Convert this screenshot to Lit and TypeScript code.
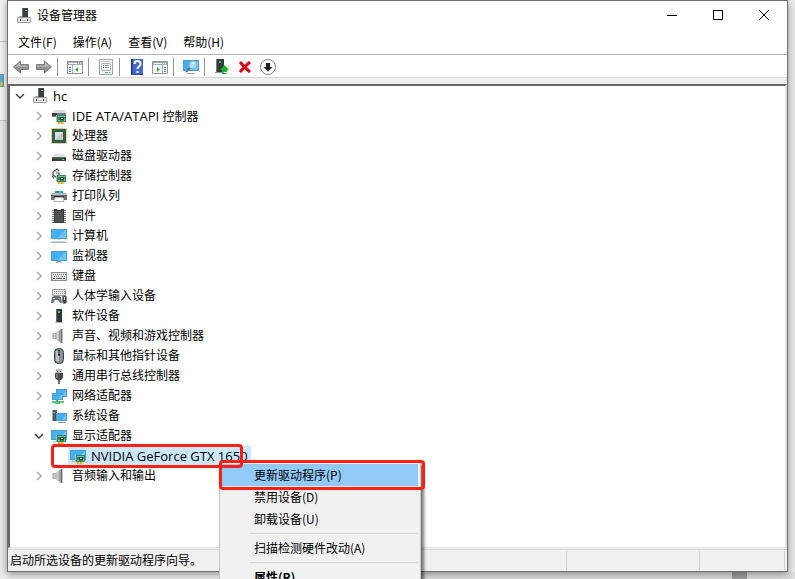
import { LitElement, html, svg, css, nothing } from "lit";
import { customElement, property, state } from "lit/decorators.js";
import { classMap } from "lit/directives/class-map.js";

const screen = (x: number, y: number, w: number, h: number) => svg`
  <rect x=${x} y=${y} width=${w} height=${h} fill="#4a9fcf"/>
  <rect x=${x + 1} y=${y + 1} width=${w - 2} height=${h - 2} fill="#41b0f5"/>
  <path d="M${x + w - 1} ${y + 1}v${h - 2}h-${w - 7}z" fill="#6cc4fa"/>`;

const card = svg`
  <path d="M5 7h1v7H5z" fill="#b5b5b5"/>
  <path d="M6 7h9v7H6z" fill="#2f8a5f"/>
  <path d="M7 8h7v1H7zM7 12h2v1H7zM13 11h1v2h-1z" fill="#7cc69a"/>
  <path d="M9 9h4v3H9z" fill="#174b38"/><path d="M10 10h2v1h-2z" fill="#b3d8c4"/>
  <path d="M7 14h6v2H7z" fill="#f2a51c"/><path d="M9 14h1v2H9zM12 14h1v2h-1z" fill="#ffe08a"/>`;

const speaker = svg`
  <path d="M2 5.500h3v5H2z" fill="#c9cdd0" stroke="#a3a8ab"/><path d="M5 5l5-4v14l-5-4z" fill="#9a9ea1"/>
  <path d="M5 5l3-2.400v10.800L5 11z" fill="#c3c6c8"/><path d="M10 1h1v14h-1z" fill="#6f7477"/><path d="M11 1h1v14h-1z" fill="#b9bdc0"/>`;

const glyphs: Record<string, unknown> = {
  computerRoot: svg`
    <path d="M6 0h6v9H6z" fill="#3c4244"/><path d="M6 0h1v9H6z" fill="#687073"/><path d="M9 2h2v1H9z" fill="#29e32e"/>
    <path d="M3 8h3v1H3z" fill="#9ea3a5"/><path d="M2 9h12l1 2H1z" fill="#c4c8ca"/><path d="M1.500 9.500h13v5h-13z" fill="#e6e8e8" stroke="#989da0"/>
    <path d="M4 11h1v2H4zM11 11h1v2h-1z" fill="#2f3436"/><path d="M6 12h4v1H6z" fill="#c4c8ca"/>`,
  ide: svg`<path d="M3 2h10l2 3H1z" fill="#dadcde"/><path d="M1 5h14v4H1z" fill="#777d80"/><path d="M1 5h5v3H1z" fill="#3c4043"/>${card}`,
  cpu: svg`
    <rect x=".5" y=".5" width="15" height="15" fill="none" stroke="#c99a3a" stroke-dasharray="1 1"/>
    <path d="M1 1h14v14H1z" fill="#2f5f47"/><path d="M4 4h8v8H4z" fill="#dcdedd"/><path d="M4 12l8-8v8z" fill="#c3c7c4"/>`,
  disk: svg`<path d="M3 6h10l2 3H1z" fill="#dfe2e3"/><path d="M1 9h14v4H1z" fill="#3a3f41"/><path d="M1 9h14v1H1z" fill="#666"/><path d="M11 11h2v1h-2z" fill="#32e94a"/>`,
  storage: svg`
    <path d="M8 3L6 1 2 4v3l3 2 3-2V5H5M1 8l2 2" fill="none" stroke="#4a4e50" stroke-width="1.200"/>
    <path d="M3 4l3-1" stroke="#b8bcbf"/>${card}`,
  printer: svg`
    <path d="M4 3h8v2H4z" fill="#188ed4"/><path d="M8 3h3v2H8z" fill="#3cc28b"/>
    <path d="M2 5h12l2 2v5h-3v-2H3v2H0V7z" fill="#6b7073"/><path d="M2 5h12l1 2H1z" fill="#b9bdc0"/>
    <path d="M3 8h10v2H3z" fill="#303436"/><path d="M4 9.500h8l1 4H3z" fill="#fff" stroke="#aab0b3"/>`,
  firmware: svg`
    <path d="M2 2v13M14 2v13" stroke="#6b6f71" stroke-width="2" stroke-dasharray="1 1"/>
    <path d="M3 1h3v1h4V1h3v14H3z" fill="#373b3d"/><path d="M4 3h8v11H4z" fill="#4c5153"/>`,
  computer: svg`${screen(0, 1, 16, 10)}<path d="M6 11h4v1H6z" fill="#d6dde0"/><path d="M2 13h12l2 1H0z" fill="#cfd6da"/><path d="M0 14h16v1H0z" fill="#9db9c6"/>`,
  monitor: svg`${screen(0, 3, 16, 10)}<path d="M6 13h4v1H6z" fill="#9ba2a5"/><path d="M5 14h6v1H5z" fill="#c5cacd"/>`,
  keyboard: svg`
    <rect x=".5" y="4.500" width="15" height="8" fill="#e3e5e6" stroke="#8a8e90"/>
    <path d="M2 6.500h13M3 8.500h11" stroke="#76797c" stroke-dasharray="1 1"/><path d="M2 10.500h2M5 10.500h6M12 10.500h2" stroke="#66696c"/>`,
  hid: svg`
    <path d="M1.500 1.500h13v6h-13z" fill="#e6e8e9" stroke="#9b9fa1"/><path d="M3 3.500h11M3 5.500h11" stroke="#8a8e91" stroke-dasharray="1 1"/>
    <path d="M0 15l1-6 2-1h5l2 1 1 6H9l-2-3H4l-2 3z" fill="#6b7278"/><path d="M2 10h2v1H2z" fill="#eee"/><path d="M7 10h2v1H7z" fill="#39a7ee"/>
    <rect x="11.500" y="7.500" width="4" height="8" rx="2" fill="#3c4145" stroke="#818588"/><path d="M13 9h1v3h-1z" fill="#d7dadd"/>`,
  software: svg`<path d="M5 1h6v13H5z" fill="#303436"/><path d="M5 1h1v13H5z" fill="#666c6e"/><path d="M7 3h2v2H7z" fill="#29e835"/><path d="M4 14h8v1H4z" fill="#b3b8ba"/>`,
  sound: speaker,
  mouse: svg`<rect x="3.500" y=".5" width="9" height="15" rx="4" fill="#8b9298" stroke="#3a3d40"/><path d="M5 3h3v10H5z" fill="#bbc3c8"/><rect x="7" y="2" width="2" height="6" rx="1" fill="#25282a"/><path d="M8 3v3" stroke="#5bb4e8"/>`,
  usb: svg`<path d="M5 1h6v5H5z" fill="#b9bdc0"/><path d="M6 3h1v1H6zM9 3h1v1H9z" fill="#34383a"/><path d="M4 5h8v5l-2 2H6l-2-2z" fill="#474c4e"/><path d="M5 6h2v4H5z" fill="#777d80"/><path d="M7 12h2v4H7z" fill="#6b7073"/>`,
  network: svg`${screen(5, 1, 11, 8)}${screen(1, 5, 11, 7)}<path d="M5 12h2v1H5z" fill="#83878a"/><path d="M1 14h12" stroke="#62c97a" stroke-width="2"/><path d="M4 13h5v3H4z" fill="#45c463"/>`,
  system: svg`<path d="M1 2h5v11H1z" fill="#52585b"/><path d="M2 4h2v1H2z" fill="#37e943"/><path d="M1 2h1v11H1z" fill="#a3a9ac"/>${screen(5, 5, 11, 8)}<path d="M7 14h8v1H7z" fill="#9ba2a5"/>`,
  display: svg`${screen(0, 2, 16, 10)}<path d="M2 13h4v1H2z" fill="#b0b8bb"/>${card}`,
  back: svg`<path d="M.5 8l7-6v3.500h8v5h-8V14z" fill="#929292" stroke="#7b7b7b"/><path d="M2 8l5-4.500v3h8v1H5z" fill="#bdbdbd"/>`,
  forward: svg`<path d="M15.500 8l-7-6v3.500h-8v5h8V14z" fill="#929292" stroke="#7b7b7b"/><path d="M14 8L9 3.500v3H1v1h10z" fill="#bdbdbd"/>`,
  paneLeft: svg`
    <path d="M.5 2.500h15v12H.5z" fill="#fff" stroke="#8b9299"/><path d="M1 3h14v3H1z" fill="#a3adb9"/><path d="M2 4.500h8M11 4.500h1M13 4.500h1" stroke="#fff"/>
    <path d="M5.500 6v8" stroke="#a3adb9"/><path d="M2 8.500h2M2 10.500h2M2 12.500h2" stroke="#3b83c8"/><path d="M11 8v5l-3-2.500z" fill="#31ad27"/>`,
  paneRight: svg`
    <path d="M.5 2.500h15v12H.5z" fill="#fff" stroke="#8b9299"/><path d="M1 3h14v3H1z" fill="#a3adb9"/><path d="M2 4.500h8M11 4.500h1M13 4.500h1" stroke="#fff"/>
    <path d="M10.500 6v8" stroke="#a3adb9"/><path d="M12 8.500h2M12 10.500h2M12 12.500h2" stroke="#3b83c8"/><path d="M5 8v5l3-2.500z" fill="#31ad27"/>`,
  properties: svg`
    <path d="M1.500.5h13v15h-13z" fill="#fafafa" stroke="#a2a2a2"/><path d="M3 2.500h9" stroke="#c3c3c3"/>
    <path d="M3.500 4.500h9v7h-9z" fill="#fff" stroke="#adb4ba"/><path d="M7 6.500h4M7 8.500h4" stroke="#8f979e"/><path d="M5 6.500h1M5 8.500h1" stroke="#289ac9"/>
    <path d="M7 13.500h3" stroke="#20b7dc"/><path d="M11 13.500h2" stroke="#aaa"/>`,
  help: svg`<path d="M2 0h12v16H2z" fill="#2e4ba7"/><path d="M4 0h10v15H4z" fill="#4269ce"/><path d="M2 0h1v16H2z" fill="#1d347e"/>
    <path d="M5.500 5q0-3 3-3t3 3q0 1.500-1.500 2.500T8.500 10" fill="none" stroke="#fff" stroke-width="2"/><path d="M7.500 12h2v2h-2z" fill="#fff"/>`,
  scan: svg`${screen(0, 1, 16, 11)}<path d="M4 14h8v1H4z" fill="#9aa9b2"/><circle cx="10" cy="6" r="4" fill="#a5dcfa" stroke="#8fb5c9"/><path d="M7 9l-4 4" stroke="#61717d" stroke-width="2"/><path d="M9 4h3" stroke="#fff"/>`,
  update: svg`<path d="M2 0h8v13H2z" fill="#373c3e"/><path d="M2 0h1v13H2z" fill="#777d80"/><path d="M5 2h2v2H5z" fill="#35df38"/><path d="M1 13h9v1H1z" fill="#8f9597"/><path d="M10.500 6L15 11h-2v2H8v-2H6z" fill="#14b52c"/><path d="M8 14h5v1H8z" fill="#14b52c"/>`,
  remove: svg`<path d="M3 3q4 5 10 10M13 3Q7 8 3 13" fill="none" stroke="#db0a18" stroke-width="3"/>`,
  disable: svg`<circle cx="8" cy="8" r="7.500" fill="#fbfbfb" stroke="#838383"/><path d="M6 4h4v4h2.500L8 12.500 3.500 8H6z" fill="#202020"/>`,
  minimize: svg`<path d="M3 8.500h10" stroke="#000"/>`,
  maximize: svg`<path d="M3.500 3.500h9v9h-9z" fill="none" stroke="#000"/>`,
  close: svg`<path d="M3 3l10 10M13 3L3 13" stroke="#000"/>`,
  collapsed: svg`<path d="M6 4l4 4-4 4" fill="none" stroke="#a6a6a6" stroke-width="1.500"/>`,
  expanded: svg`<path d="M4 6l4 4 4-4" fill="none" stroke="#404040" stroke-width="1.500"/>`,
};

@customElement("dm-icon")
class DmIcon extends LitElement {
  @property() name = "";
  static styles = css`
    :host { display: block; width: 16px; height: 16px; flex: none; }
    svg { display: block; width: 16px; height: 16px; }
  `;
  render() {
    return html`<svg viewBox="0 0 16 16" aria-hidden="true">${glyphs[this.name]}</svg>`;
  }
}

interface Category { icon: string; label: string; devices?: string[]; }

const categories: Category[] = [
  { icon: "ide", label: "IDE ATA/ATAPI 控制器" },
  { icon: "cpu", label: "处理器" },
  { icon: "disk", label: "磁盘驱动器" },
  { icon: "storage", label: "存储控制器" },
  { icon: "printer", label: "打印队列" },
  { icon: "firmware", label: "固件" },
  { icon: "computer", label: "计算机" },
  { icon: "monitor", label: "监视器" },
  { icon: "keyboard", label: "键盘" },
  { icon: "hid", label: "人体学输入设备" },
  { icon: "software", label: "软件设备" },
  { icon: "sound", label: "声音、视频和游戏控制器" },
  { icon: "mouse", label: "鼠标和其他指针设备" },
  { icon: "usb", label: "通用串行总线控制器" },
  { icon: "network", label: "网络适配器" },
  { icon: "system", label: "系统设备" },
  { icon: "display", label: "显示适配器", devices: ["NVIDIA GeForce GTX 1650"] },
  { icon: "sound", label: "音频输入和输出" },
];

const toolbar: string[][][] = [
  [["back", "后退"], ["forward", "前进"]],
  [["paneLeft", "显示/隐藏控制台树"]],
  [["properties", "属性"]],
  [["help", "帮助"], ["paneRight", "显示/隐藏操作窗格"]],
  [["scan", "扫描检测硬件改动"]],
  [["update", "更新驱动程序"], ["remove", "卸载设备"], ["disable", "禁用设备"]],
];

/** Latin runs are set one size larger than the Chinese text beside them. */
const mixed = (text: string) =>
  text.split(/([A-Za-z0-9/ ]+)/).map((part) =>
    /[A-Za-z0-9]/.test(part) ? html`<span class="latin">${part}</span>` : part);

@customElement("app-root")
class AppRoot extends LitElement {
  @state() private open = new Set(["显示适配器"]);

  static styles = css`
    :host {
      display: flex; position: relative; box-sizing: border-box; min-height: 100vh; max-height: 100vh;
      padding: 0 7px 7px; overflow: hidden; background: #ebebeb; color: #000;
      font: 12px/20px "Open Sans", "Noto Sans CJK SC", sans-serif;
    }
    button { border: 0; padding: 0; margin: 0; background: none; font: inherit; color: inherit; text-align: left; }
    ul { list-style: none; margin: 0; padding: 0; }
    .behind-top { position: absolute; left: 0; top: 0; width: 7px; height: 121px; box-sizing: border-box; background: #f3f3f3; border-bottom: 1px solid #c8c8c8; }
    .behind-line { height: 42px; border-bottom: 1px solid #c8c8c8; box-sizing: border-box; }
    .behind-icon { position: absolute; left: 0; top: 74px; width: 4px; height: 13px; box-sizing: border-box; background: linear-gradient(#58abd8 60%, #c4bd69 60%); border: 1px solid #6799b5; border-left: 0; }
    .behind-bottom { position: absolute; left: 219px; right: 0; bottom: 0; height: 7px; border-left: 1px solid #c5c5c5; background: #dedede; }
    .behind-thumb { position: absolute; right: 48px; bottom: 0; width: 15px; height: 7px; background: #a0a0a0; }
    .window { position: relative; flex: 1; min-width: 0; display: flex; flex-direction: column; background: #f0f0f0; border: 1px solid #6e6e6e; box-shadow: 0 2px 8px #0006; }
    .title { display: flex; align-items: center; height: 30px; background: #fff; padding-left: 8px; }
    .title h1 { flex: 1; margin: 0 0 0 5px; font: inherit; }
    .title button { width: 46px; height: 28px; align-self: flex-start; display: grid; place-items: center; }
    .menubar { display: flex; height: 23px; padding-left: 2px; background: #fff; border-bottom: 1px solid #b4b4b4; font-family: "Noto Sans CJK SC", sans-serif; }
    .menubar button { padding: 0 8px; height: 22px; }
    .toolbar { display: flex; height: 20px; padding: 2px 1px 0; background: #fff; border-bottom: 1px solid #d8d8d8; align-items: center; margin-bottom: 6px; }
    .group { display: flex; align-items: center; }
    .group + .group::before { content: ""; width: 1px; height: 18px; background: #929292; margin: 0 5px 0 2px; }
    .toolbar button { width: 23px; height: 20px; display: grid; place-items: center; }
    .tree { flex: 1; min-height: 0; background: #fff; border: solid; border-width: 2px 2px 1px; border-color: #696969 #e3e3e3 #e3e3e3 #696969; margin: 0 0 1px; }
    .row { position: relative; display: flex; align-items: center; height: 20px; padding-left: 2px; }
    .level1 { padding-left: 21px; }
    .level2 { padding-left: 58px; }
    .twist { width: 16px; height: 16px; flex: none; margin-right: 4px; }
    .name { padding: 0 5px; white-space: pre; }
    .latin { font-size: 13px; }
    .selected { display: flex; align-items: center; height: 20px; padding-left: 2px; background: #cce8ff; }
    .selected .name { padding-right: 3px; }
    .mark { position: absolute; box-sizing: border-box; border: 3px solid #ff2015; border-radius: 4px; pointer-events: none; z-index: 3; }
    .device-mark { left: 41px; top: -2px; width: 192px; height: 24px; }
    .menu { position: absolute; z-index: 2; left: 209px; top: 15px; width: 202px; box-sizing: border-box; background: #f1f1f1; border: 1px solid #c4c4c4; box-shadow: 3px 3px 3px #0008; padding: 2px 2px 2px 1px; font-family: "Noto Sans CJK SC", sans-serif; }
    .menu button { display: block; width: 100%; height: 22px; line-height: 20px; padding-left: 33px; }
    .menu .active { background: #91c9f7; }
    .menu .strong { font-weight: 700; }
    .menu hr { border: 0; height: 1px; background: #d4d4d4; margin: 3px 0 3px 29px; }
    .menu-mark { left: -1px; top: -2px; width: 206px; height: 30px; }
    .status { display: flex; height: 22px; box-sizing: border-box; border-top: 1px solid #d7d7d7; }
    .cell { box-sizing: border-box; margin: 1px 0; border-right: 1px solid #d0d0d0; padding-left: 2px; white-space: nowrap; }
    .message { flex: 1; }
    .mid { width: 133px; }
    .end { width: 85px; margin-right: 2px; }
  `;

  private toggle(label: string) {
    const next = new Set(this.open);
    next.has(label) ? next.delete(label) : next.add(label);
    this.open = next;
  }

  private contextMenu() {
    return html`<div class="menu" role="menu">
      <button class="active" role="menuitem">更新驱动程序(P)</button>
      <button role="menuitem">禁用设备(D)</button>
      <button role="menuitem">卸载设备(U)</button>
      <hr />
      <button role="menuitem">扫描检测硬件改动(A)</button>
      <hr />
      <button class="strong" role="menuitem">属性(R)</button>
      <span class="mark menu-mark"></span>
    </div>`;
  }

  private category(c: Category) {
    const open = this.open.has(c.label);
    return html`<li role="treeitem" aria-expanded=${open}>
      <div class=${classMap({ row: true, level1: true })}>
        <button class="twist" aria-label=${c.label} @click=${() => this.toggle(c.label)}>
          <dm-icon name=${open ? "expanded" : "collapsed"}></dm-icon>
        </button>
        <dm-icon name=${c.icon}></dm-icon><span class="name">${mixed(c.label)}</span>
      </div>
      ${open && c.devices ? html`<ul role="group">${c.devices.map((d) => html`
        <li class="row level2" role="treeitem" aria-selected="true">
          <span class="selected"><dm-icon name=${c.icon}></dm-icon><span class="name">${mixed(d)}</span></span>
          <span class="mark device-mark"></span>${this.contextMenu()}
        </li>`)}</ul>` : nothing}
    </li>`;
  }

  render() {
    return html`
      <div class="behind-top"><div class="behind-line"></div><div class="behind-icon"></div></div>
      <div class="behind-bottom"></div><div class="behind-thumb"></div>
      <main class="window">
        <header class="title">
          <dm-icon name="computerRoot"></dm-icon><h1>设备管理器</h1>
          <button aria-label="最小化"><dm-icon name="minimize"></dm-icon></button>
          <button aria-label="最大化"><dm-icon name="maximize"></dm-icon></button>
          <button aria-label="关闭"><dm-icon name="close"></dm-icon></button>
        </header>
        <nav class="menubar">
          ${["文件(F)", "操作(A)", "查看(V)", "帮助(H)"].map((m) => html`<button>${m}</button>`)}
        </nav>
        <div class="toolbar" role="toolbar">
          ${toolbar.map((g) => html`<div class="group">${g.map(([icon, label]) => html`
            <button aria-label=${label}><dm-icon name=${icon}></dm-icon></button>`)}</div>`)}
        </div>
        <section class="tree">
          <ul role="tree">
            <li role="treeitem" aria-expanded="true">
              <div class="row">
                <button class="twist" aria-label="hc"><dm-icon name="expanded"></dm-icon></button>
                <dm-icon name="computerRoot"></dm-icon><span class="name">${mixed("hc")}</span>
              </div>
              <ul role="group">${categories.map((c) => this.category(c))}</ul>
            </li>
          </ul>
        </section>
        <footer class="status">
          <div class="cell message">启动所选设备的更新驱动程序向导。</div>
          <div class="cell mid"></div>
          <div class="cell end"></div>
        </footer>
      </main>`;
  }
}
